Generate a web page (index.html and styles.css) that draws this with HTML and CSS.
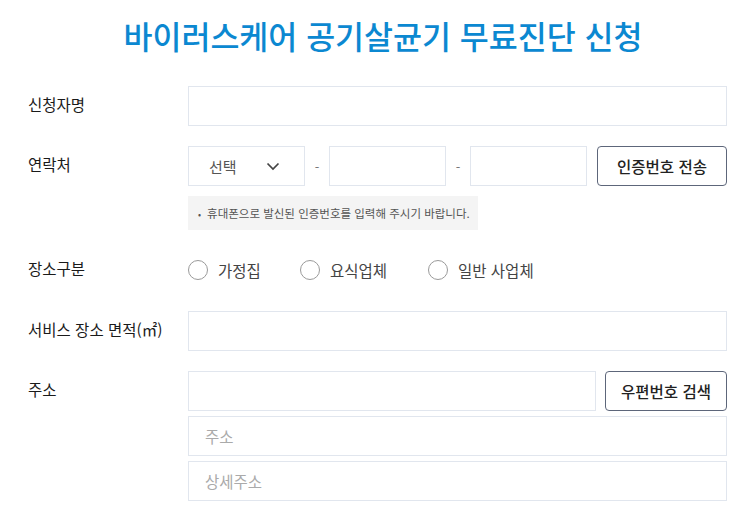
FILE: index.html
```html
<!DOCTYPE html>
<html lang="ko">
<head>
<meta charset="utf-8">
<link rel="stylesheet" href="styles.css">
</head>
<body>
<div class="page">
  <h1 class="title">바이러스케어 공기살균기 무료진단 신청</h1>
  <div class="form">
    <div class="row row-name">
      <div class="label">신청자명</div>
      <div class="field"><div class="input full"></div></div>
    </div>
    <div class="row row-phone">
      <div class="label">연락처</div>
      <div class="field">
        <div class="phone-line">
          <div class="input select"><span>선택</span>
            <svg class="chev" width="14" height="9" viewBox="0 0 14 9"><path d="M1.5 1.5 L7 7 L12.5 1.5" fill="none" stroke="#444" stroke-width="1.7"/></svg>
          </div>
          <span class="dash">-</span>
          <div class="input phone"></div>
          <span class="dash">-</span>
          <div class="input phone"></div>
          <div class="btn btn-auth">인증번호 전송</div>
        </div>
        <div class="hint"><span class="bullet">•</span>휴대폰으로 발신된 인증번호를 입력해 주시기 바랍니다.</div>
      </div>
    </div>
    <div class="row row-place">
      <div class="label">장소구분</div>
      <div class="field radios">
        <label class="radio r1"><span class="circle"></span>가정집</label>
        <label class="radio r2"><span class="circle"></span>요식업체</label>
        <label class="radio r3"><span class="circle"></span>일반 사업체</label>
      </div>
    </div>
    <div class="row row-area">
      <div class="label">서비스 장소 면적(㎡)</div>
      <div class="field"><div class="input full"></div></div>
    </div>
    <div class="row row-addr">
      <div class="label">주소</div>
      <div class="field addr">
        <div class="addr-line">
          <div class="input zip"></div>
          <div class="btn btn-zip">우편번호 검색</div>
        </div>
        <div class="input full ph">주소</div>
        <div class="input full ph">상세주소</div>
      </div>
    </div>
  </div>
</div>
</body>
</html>
```

FILE: styles.css
```css
* { box-sizing: border-box; }
html, body { margin: 0; padding: 0; background: #fff; }
body {
  font-family: "Noto Sans CJK KR", "Noto Sans", sans-serif;
  color: #222;
  width: 741px;
  height: 526px;
  overflow: hidden;
}
.page { padding: 0 14px 0 28px; }
.title {
  margin: 0 -14px 0 -28px;
  padding: 12px 0 0 25px;
  height: 70px;
  text-align: center;
  font-size: 31.5px;
  line-height: 46px;
  font-weight: 500;
  color: #0b88d1;
}
.form { display: flex; flex-direction: column; }
.row { display: flex; align-items: flex-start; }
.label {
  width: 160px;
  flex: none;
  font-size: 15.5px;
  font-weight: 400;
  line-height: 37px;
  color: #1a1a1a;
}
.field { flex: 1; }
.input {
  height: 40px;
  border: 1px solid #e1e6ee;
  background: #fff;
}
.full { width: 100%; }
.row-name { margin-top: 16px; }
.row-phone { margin-top: 20px; }
.phone-line { display: flex; align-items: center; }
.select {
  width: 117px;
  display: flex;
  align-items: center;
  justify-content: space-between;
  padding: 0 24px 0 20px;
  font-size: 15px;
  color: #555;
}
.chev { display: block; }
.dash { width: 24px; text-align: center; font-size: 13px; color: #777; }
.phone { width: 117px; }
.btn {
  height: 40px;
  border: 1px solid #5d667a;
  border-radius: 4px;
  display: flex;
  align-items: center;
  justify-content: center;
  font-size: 15.5px;
  font-weight: 500;
  color: #222;
}
.btn-auth { width: 130px; margin-left: auto; }
.hint {
  margin-top: 10px;
  width: 290px;
  height: 34px;
  background: #f4f4f4;
  font-size: 11.5px;
  line-height: 34px;
  color: #555;
  padding-left: 10px;
  white-space: nowrap;
}
.bullet { margin-right: 6px; font-size: 9px; }
.row-place { margin-top: 20px; }
.radios { display: flex; align-items: center; height: 40px; }
.radio {
  display: flex;
  align-items: center;
  font-size: 15.5px;
  color: #444;
}
.circle {
  width: 20px;
  height: 20px;
  border: 1px solid #9a9a9a;
  border-radius: 50%;
  margin-right: 10px;
  background: #fff;
}
.r1 { width: 112px; }
.r2 { width: 128px; }
.row-area { margin-top: 21px; }
.row-addr { margin-top: 20px; }
.addr-line { display: flex; }
.zip { width: 408px; }
.btn-zip { width: 122px; margin-left: auto; }
.addr .full { margin-top: 5px; }
.ph {
  font-size: 15.5px;
  color: #aaa;
  line-height: 38px;
  padding-left: 16px;
}
```
